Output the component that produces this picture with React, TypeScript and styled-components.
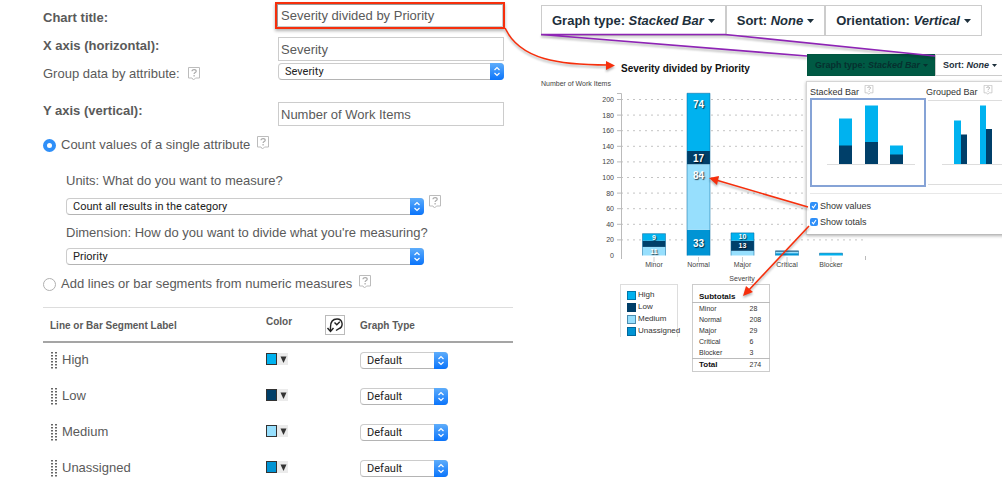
import React from 'react';
import styled, { createGlobalStyle } from 'styled-components';

const colors = {
  high: '#00b2ef',
  low: '#003f69',
  medium: '#97dffd',
  unassigned: '#0094d4',
  text: '#5a5a5a',
  red: '#f62f0c',
  purple: '#8e24b5',
};

const GlobalStyle = createGlobalStyle`
  *, *::before, *::after { box-sizing: border-box; }
  body {
    margin: 0;
    background: #fff;
    color: ${colors.text};
    font: 13px/20px "Liberation Sans", Arial, sans-serif;
  }
  button, input, select { font: inherit; color: inherit; margin: 0; }
`;

const Page = styled.main`
  position: relative;
  display: grid;
  grid-template-columns: minmax(0, 541fr) minmax(0, 461fr);
  overflow: hidden;
`;

const Form = styled.form`
  padding: 0 28px 0 43px;
`;

const AxisFields = styled.div`
  display: grid;
  grid-template-columns: 232px minmax(0, 1fr);
  padding-right: 8px;
`;

const LabelColumn = styled.div`
  display: flex;
  flex-direction: column;
  padding-top: 4px;
  line-height: 28px;
`;

const FieldColumn = styled.div`
  display: flex;
  flex-direction: column;
  padding-top: 2px;
`;

const FieldLabel = styled.label<{ $spaced?: boolean }>`
  display: block;
  font-weight: bold;
  margin-top: ${(p) => (p.$spaced ? '9px' : '0')};
`;

const LabelWithHelp = styled.div`
  display: flex;
  align-items: center;
  gap: 7px;
  height: 28px;
`;

const Highlight = styled.div`
  border: 2px solid ${colors.red};
  height: 27px;
  box-shadow: 0 2px 3px rgba(0, 0, 0, 0.3);
`;

const TextInput = styled.input`
  display: block;
  width: 100%;
  height: 24px;
  padding: 0 2px;
  border: 1px solid #ccc;
  border-radius: 0;
  background: #fff;
  ${Highlight} & { height: 23px; padding: 0 3px; border-color: #999 #ccc #ccc #999; }
`;

const FieldInset = styled.div<{ $top: number }>`
  margin: ${(p) => p.$top}px 1px 0 3px;
`;

const SelectFrame = styled.div`
  position: relative;
  flex: 1;
  height: 17px;
`;

const SelectControl = styled.select`
  appearance: none;
  display: block;
  width: 100%;
  height: 17px;
  padding: 0 16px 0 6px;
  border: 1px solid #ccc;
  border-bottom-color: #b4b4b4;
  border-radius: 4px;
  background: #fff;
  color: #222;
  font: 11px/15px Roboto, sans-serif;
`;

const SelectCap = styled.span`
  position: absolute;
  top: 0;
  right: 0;
  width: 14px;
  height: 17px;
  border-radius: 0 4px 4px 0;
  background: linear-gradient(#5eadfb, #0a74fb);
  pointer-events: none;
  svg { display: block; }
`;

const HelpButton = styled.button<{ $small?: boolean }>`
  display: block;
  flex: none;
  width: ${(p) => (p.$small ? '10px' : '14px')};
  height: ${(p) => (p.$small ? '10px' : '14px')};
  padding: 0;
  border: 0;
  background: none;
  svg { display: block; width: 100%; height: 100%; }
`;

const RadioRow = styled.div<{ $top: number }>`
  display: flex;
  align-items: center;
  height: 20px;
  margin-top: ${(p) => p.$top}px;
  label { margin: 0 6px 0 5px; }
  ${HelpButton} { margin-bottom: 4px; }
`;

const Radio = styled.input`
  appearance: none;
  flex: none;
  width: 13px;
  height: 13px;
  border: 1px solid #b0b0b0;
  border-radius: 50%;
  background: #fff;
  &:checked { border: 4px solid #2f8ff8; }
`;

const MeasureGroup = styled.div`
  display: flex;
  flex-direction: column;
  padding: 16px 0 0 23px;
`;

const SelectRow = styled.div<{ $top: number; $bottom: number }>`
  display: flex;
  gap: 4px;
  width: 376px;
  max-width: 100%;
  margin: ${(p) => p.$top}px 0 ${(p) => p.$bottom}px;
  ${HelpButton} { margin-top: -3px; }
  &:last-child { padding-right: 18px; }
`;

const SegmentTable = styled.table`
  width: 100%;
  margin-top: 13px;
  border-collapse: collapse;
  table-layout: fixed;
  border-top: 1px solid #ddd;
`;

const HeadCell = styled.th<{ $width?: number; $raised?: boolean }>`
  width: ${(p) => (p.$width ? `${p.$width}px` : 'auto')};
  height: 34px;
  padding: ${(p) => (p.$raised ? '0 0 4px' : '4px 0 0')};
  border-bottom: 2px solid #a5a5a5;
  font-size: 10px;
  line-height: 12px;
  text-align: left;
  &:first-child { padding-left: 7px; }
`;

const BodyCell = styled.td`
  padding: 8px 0 10px;
  vertical-align: top;
  tr:last-child & { padding-bottom: 0; }
`;

const SegmentName = styled.div`
  display: flex;
  align-items: center;
  gap: 5px;
  height: 18px;
  padding-left: 8px;
`;

const HistoryButton = styled.button`
  display: block;
  width: 20px;
  height: 20px;
  margin-top: -3px;
  padding: 0;
  border: 1px solid #bbb;
  background: #fff;
  svg { display: block; }
`;

const ColorButton = styled.button<{ $color: string }>`
  display: flex;
  align-items: center;
  margin-top: 2px;
  padding: 0;
  border: 0;
  background: #ebebeb;
  height: 12px;
  &::before {
    content: '';
    width: 11px;
    height: 12px;
    border: 1px solid #333;
    background: ${(p) => p.$color};
  }
  svg { display: block; margin-left: 2px; }
`;

const TypeSelect = styled.div`
  display: flex;
  width: 88px;
  padding-top: 1px;
`;

const Preview = styled.section`
  position: relative;
  color: #333;
`;

const Toolbar = styled.div<{ $compact?: boolean }>`
  display: flex;
  padding-top: ${(p) => (p.$compact ? '0' : '5px')};
`;

const ToolButton = styled.button<{ $compact?: boolean; $active?: boolean }>`
  display: flex;
  align-items: center;
  flex: none;
  gap: ${(p) => (p.$compact ? '3px' : '4px')};
  height: ${(p) => (p.$compact ? '22px' : '31px')};
  padding: ${(p) => (p.$compact ? '0 6px 0 7px' : '0 10px')};
  border: 1px solid ${(p) => (p.$active ? '#00553f' : '#ccc')};
  background: ${(p) => (p.$active ? '#005a44' : '#fff')};
  color: ${(p) => (p.$active ? '#06302f' : '#1d2f3b')};
  font-size: ${(p) => (p.$compact ? '9px' : '13px')};
  font-weight: bold;
  white-space: nowrap;
  & + & { margin-left: ${(p) => (p.$compact ? '0' : '-1px')}; }
`;

const ChartSvg = styled.svg`
  display: block;
  width: 100%;
  font-family: "Liberation Sans", Arial, sans-serif;
`;

const Summary = styled.div`
  display: flex;
  align-items: flex-start;
  gap: 14px;
  padding-left: 79px;
`;

const Legend = styled.ul`
  width: 58px;
  margin: 0;
  padding: 4px 0 0 6px;
  border: 1px solid #ddd;
  border-bottom: 0;
  list-style: none;
  font-size: 8px;
  line-height: 12px;
`;

const LegendItem = styled.li<{ $color: string }>`
  display: flex;
  align-items: center;
  gap: 2px;
  height: 12px;
  &::before {
    content: '';
    flex: none;
    width: 9px;
    height: 9px;
    border: 1px solid rgba(0, 60, 100, 0.5);
    background: ${(p) => p.$color};
  }
`;

const Totals = styled.table`
  width: 78px;
  border: 1px solid #ccc;
  border-collapse: collapse;
  font-size: 7px;
  line-height: 11px;
  th, td { padding: 0 0 0 6px; text-align: left; font-weight: normal; }
  td { padding: 0; width: 20px; }
  thead th { padding-top: 6px; font-size: 8px; font-weight: bold; border-bottom: 1px solid #bbb; color: #111; }
  tfoot th { font-size: 8px; font-weight: bold; color: #111; }
  tfoot tr { border-top: 1px solid #bbb; line-height: 12px; }
`;

const Popup = styled.div`
  position: absolute;
  top: 54px;
  left: 266px;
  right: 0;
`;

const Menu = styled.div`
  margin: 5px -8px 0 -1px;
  padding: 0 0 7px 3px;
  height: 154px;
  border: 1px solid #d5d5d5;
  border-bottom-color: #bbb;
  background: #fff;
  box-shadow: 0 1px 3px rgba(0, 0, 0, 0.3);
  font-size: 9px;
  line-height: 12px;
`;

const TypeChoices = styled.div`
  display: grid;
  grid-template-columns: 116px minmax(0, 1fr);
  padding-bottom: 6px;
  border-bottom: 1px solid #e8e8e8;
`;

const TypeCaption = styled.div`
  display: flex;
  align-items: center;
  gap: 5px;
  height: 16px;
  padding-top: 3px;
  ${HelpButton} { margin-bottom: 4px; }
`;

const Thumb = styled.button<{ $selected?: boolean }>`
  display: block;
  width: 100%;
  height: 89px;
  padding: 0;
  border: 2px solid ${(p) => (p.$selected ? '#86a3d6' : 'transparent')};
  box-shadow: ${(p) => (p.$selected ? 'none' : 'inset 0 1px #ddd, inset 0 -1px #ddd')};
  background: #fff;
  svg { display: block; }
`;

const CheckLabel = styled.label`
  display: flex;
  align-items: center;
  gap: 2px;
  height: 16px;
`;

const CheckGroup = styled.div`
  padding-top: 4px;
`;

const Checkbox = styled.input`
  appearance: none;
  width: 8px;
  height: 8px;
  border-radius: 2px;
  background: #2f8ff8 url("data:image/svg+xml,%3Csvg xmlns='http://www.w3.org/2000/svg' viewBox='0 0 8 8'%3E%3Cpath d='M2 4.2 3.4 5.8 6 2' fill='none' stroke='white' stroke-width='1.1'/%3E%3C/svg%3E");
`;

const Annotations = styled.svg`
  position: absolute;
  top: 0;
  left: 0;
  width: 100%;
  pointer-events: none;
  filter: drop-shadow(0 2px 1px rgba(0, 0, 0, 0.3));
`;

function Help({ topic, small }: { topic: string; small?: boolean }) {
  return (
    <HelpButton type="button" $small={small} aria-label={`Help: ${topic}`}>
      <svg viewBox="0 0 14 14">
        <path d="M1.500.5h11v10.500h-4l-2 2-1.500-2h-3.500z" fill="#fff" stroke="#bcbcbc" strokeLinejoin="round" />
        <path d="M5 4.200C5 2 9.200 2 9.200 4.200 9.200 5.600 7.100 5.600 7.100 7.100M7.100 8.100v1.300" fill="none" stroke="#aaa" strokeWidth="1.200" />
      </svg>
    </HelpButton>
  );
}

function Select({ id, value, label }: { id: string; value: string; label?: string }) {
  return (
    <SelectFrame>
      <SelectControl id={id} aria-label={label} defaultValue={value}>
        <option>{value}</option>
      </SelectControl>
      <SelectCap>
        <svg width="14" height="17" viewBox="0 0 14 17" fill="none" stroke="#fff" strokeWidth="1.200">
          <path d="M4.500 7 7 4.500 9.500 7M4.500 10 7 12.500 9.500 10" />
        </svg>
      </SelectCap>
    </SelectFrame>
  );
}

function Grip() {
  const rows = [1, 4, 7, 10, 13, 16];
  return (
    <svg width="6" height="18" viewBox="0 0 6 18" fill="#666">
      {rows.map((y) => (
        <React.Fragment key={y}>
          <rect x="0" y={y} width="2" height="1.500" />
          <rect x="4" y={y} width="2" height="1.500" />
        </React.Fragment>
      ))}
    </svg>
  );
}

function Tool({ name, value, compact, active }: { name: string; value: string; compact?: boolean; active?: boolean }) {
  return (
    <ToolButton type="button" $compact={compact} $active={active}>
      <span>
        {name}: <em>{value}</em>
      </span>
      <svg width={compact ? 5 : 7} height={compact ? 3 : 4} viewBox="0 0 7 4" fill="currentColor">
        <path d="M0 0h7L3.500 4z" />
      </svg>
    </ToolButton>
  );
}

type Part = { kind: 'high' | 'low' | 'medium' | 'unassigned'; value: number; shown?: boolean };

const bars: { name: string; x: number; parts: Part[] }[] = [
  { name: 'Minor', x: 113, parts: [
    { kind: 'medium', value: 11, shown: true }, { kind: 'low', value: 8 }, { kind: 'high', value: 9, shown: true } ] },
  { name: 'Normal', x: 157.5, parts: [
    { kind: 'unassigned', value: 33, shown: true }, { kind: 'medium', value: 84, shown: true },
    { kind: 'low', value: 17, shown: true }, { kind: 'high', value: 74, shown: true } ] },
  { name: 'Major', x: 201.5, parts: [
    { kind: 'medium', value: 6 }, { kind: 'low', value: 13, shown: true }, { kind: 'high', value: 10, shown: true } ] },
  { name: 'Critical', x: 246, parts: [
    { kind: 'unassigned', value: 3 }, { kind: 'medium', value: 2 }, { kind: 'low', value: 1 } ] },
  { name: 'Blocker', x: 290, parts: [{ kind: 'high', value: 3 }] },
];

const ticks = [0, 20, 40, 60, 80, 100, 120, 140, 160, 180, 200];
const yFor = (value: number) => 219.5 - value * 0.78;

function Bar({ name, x, parts }: { name: string; x: number; parts: Part[] }) {
  let total = 0;
  const large = name === 'Normal';
  return (
    <g>
      <path d={`M${x} 221v5`} stroke="#ccc" />
      {parts.map((part) => {
        total += part.value;
        const top = yFor(total);
        const height = part.value * 0.78;
        const labelY = large && height > 30 ? top + 15 : top + height / 2 + (large ? 4 : 2.5);
        return (
          <g key={part.kind}>
            <rect x={x - 11.5} y={top} width="23" height={height} fill={colors[part.kind]} />
            {part.shown && (
              <text
                x={x}
                y={labelY}
                textAnchor="middle"
                fontSize={large ? 10 : 7}
                fontWeight="bold"
                fill="#fff"
                style={{ textShadow: '1px 1px 1px rgba(0,0,0,.7)' }}
              >
                {part.value}
              </text>
            )}
          </g>
        );
      })}
      <path d={`M${x - 11.5} 219.500V${yFor(total)}h23V219.500`} fill="none" stroke="#00649b" strokeOpacity=".5" />
      <text x={x} y="231" textAnchor="middle" fontSize="7">{name}</text>
    </g>
  );
}

function Chart() {
  return (
    <ChartSvg viewBox="0 0 461 248" fill="#444" role="img" aria-label="Severity divided by Priority">
      <text x="80" y="36" fontSize="10" fontWeight="bold" fill="#111">Severity divided by Priority</text>
      <text x="0" y="50" fontSize="7">Number of Work Items</text>
      {ticks.map((tick) => (
        <g key={tick}>
          {tick > 0 && <path d={`M80 ${yFor(tick)}H324`} stroke="#c4c4c4" strokeDasharray="2 4" />}
          {tick > 0 && <path d={`M76 ${yFor(tick)}h4`} stroke="#bbb" />}
          <text x="73" y={yFor(tick) + 2.5} textAnchor="end" fontSize="7">{tick}</text>
        </g>
      ))}
      <path d="M76 57.500h4.500V223M324.500 220v4" fill="none" stroke="#bbb" />
      {bars.map((bar) => (
        <Bar key={bar.name} {...bar} />
      ))}
      <text x="201" y="245" textAnchor="middle" fontSize="7">Severity</text>
    </ChartSvg>
  );
}

const segments = [
  { name: 'High', color: colors.high },
  { name: 'Low', color: colors.low },
  { name: 'Medium', color: colors.medium },
  { name: 'Unassigned', color: colors.unassigned },
];

const totals: [string, number][] = [['Minor', 28], ['Normal', 208], ['Major', 29], ['Critical', 6], ['Blocker', 3]];

function SettingsForm() {
  return (
    <Form>
      <AxisFields>
        <LabelColumn>
          <FieldLabel htmlFor="title">Chart title:</FieldLabel>
          <FieldLabel htmlFor="x-axis">X axis (horizontal):</FieldLabel>
          <LabelWithHelp>
            <label htmlFor="group">Group data by attribute:</label>
            <Help topic="group by attribute" />
          </LabelWithHelp>
          <FieldLabel htmlFor="y-axis" $spaced>Y axis (vertical):</FieldLabel>
        </LabelColumn>
        <FieldColumn>
          <Highlight>
            <TextInput id="title" defaultValue="Severity divided by Priority" />
          </Highlight>
          <FieldInset $top={8}>
            <TextInput id="x-axis" defaultValue="Severity" />
          </FieldInset>
          <FieldInset $top={2}>
            <Select id="group" value="Severity" />
          </FieldInset>
          <FieldInset $top={22}>
            <TextInput id="y-axis" defaultValue="Number of Work Items" />
          </FieldInset>
        </FieldColumn>
      </AxisFields>
      <RadioRow $top={9}>
        <Radio type="radio" name="mode" id="count" defaultChecked />
        <label htmlFor="count">Count values of a single attribute</label>
        <Help topic="count values" />
      </RadioRow>
      <MeasureGroup>
        <label htmlFor="units">Units: What do you want to measure?</label>
        <SelectRow $top={7} $bottom={8}>
          <Select id="units" value="Count all results in the category" />
          <Help topic="units" />
        </SelectRow>
        <label htmlFor="dimension">Dimension: How do you want to divide what you're measuring?</label>
        <SelectRow $top={5} $bottom={0}>
          <Select id="dimension" value="Priority" />
        </SelectRow>
      </MeasureGroup>
      <RadioRow $top={9}>
        <Radio type="radio" name="mode" id="numeric" />
        <label htmlFor="numeric">Add lines or bar segments from numeric measures</label>
        <Help topic="numeric measures" />
      </RadioRow>
      <SegmentTable>
        <thead>
          <tr>
            <HeadCell $width={223}>Line or Bar Segment Label</HeadCell>
            <HeadCell $width={59} $raised>Color</HeadCell>
            <HeadCell $width={35}>
              <HistoryButton type="button" aria-label="Reset colors">
                <svg width="18" height="18" viewBox="0 0 18 18" fill="none" stroke="#222" strokeWidth="1.400">
                  <path d="M4.500 15V11C4.500 6 7 3 11 3a5 5 0 0 1 1.500 9.800L10 14.500" />
                  <path d="M1.500 12 4.500 15.500 7.500 12M8.500 6.500l2.300 2.300 3-3" />
                </svg>
              </HistoryButton>
            </HeadCell>
            <HeadCell>Graph Type</HeadCell>
          </tr>
        </thead>
        <tbody>
          {segments.map(({ name, color }) => (
            <tr key={name}>
              <BodyCell>
                <SegmentName>
                  <Grip />
                  {name}
                </SegmentName>
              </BodyCell>
              <BodyCell colSpan={2}>
                <ColorButton type="button" $color={color} aria-label={`${name} color`}>
                  <svg width="9" height="8" viewBox="0 0 9 8" fill="#333">
                    <path d="M1.500 1.500h6L4.500 8z" />
                  </svg>
                </ColorButton>
              </BodyCell>
              <BodyCell>
                <TypeSelect>
                  <Select id={`type-${name}`} value="Default" label={`${name} graph type`} />
                </TypeSelect>
              </BodyCell>
            </tr>
          ))}
        </tbody>
      </SegmentTable>
    </Form>
  );
}

function GraphTypePopup() {
  return (
    <Popup>
      <Toolbar $compact>
        <Tool name="Graph type" value="Stacked Bar" compact active />
        <Tool name="Sort" value="None" compact />
      </Toolbar>
      <Menu>
        <TypeChoices>
          <TypeCaption>
            Stacked Bar <Help topic="stacked bar" small />
          </TypeCaption>
          <TypeCaption>
            Grouped Bar <Help topic="grouped bar" small />
          </TypeCaption>
          <Thumb type="button" $selected aria-label="Stacked Bar">
            <svg width="112" height="85" viewBox="0 0 112 85">
              <path d="M27 18.500h13V46H27zM53 5.500h13V43H53zM78 45.500h13V55H78z" fill={colors.high} />
              <path d="M27 45.500h13v19H27zM53 42h13v22.500H53zM78 54.500h13v10H78z" fill={colors.low} />
              <path d="M15 64.500h88" stroke="#ddd" />
            </svg>
          </Thumb>
          <Thumb type="button" aria-label="Grouped Bar">
            <svg width="77" height="85" viewBox="0 0 77 85">
              <path d="M26 20.500h7v44h-7zM52 5.500h6v59h-6z" fill={colors.high} />
              <path d="M33 34.500h6v30h-6zM58 29h6v35.500h-6z" fill={colors.low} />
              <path d="M14 64.500h63" stroke="#ddd" />
            </svg>
          </Thumb>
        </TypeChoices>
        <CheckGroup>
          <CheckLabel>
            <Checkbox type="checkbox" defaultChecked />
            Show values
          </CheckLabel>
          <CheckLabel>
            <Checkbox type="checkbox" defaultChecked />
            Show totals
          </CheckLabel>
        </CheckGroup>
      </Menu>
    </Popup>
  );
}

export default function App() {
  return (
    <Page>
      <GlobalStyle />
      <SettingsForm />
      <Preview>
        <Toolbar>
          <Tool name="Graph type" value="Stacked Bar" />
          <Tool name="Sort" value="None" />
          <Tool name="Orientation" value="Vertical" />
        </Toolbar>
        <Chart />
        <Summary>
          <Legend>
            {segments.map(({ name, color }) => (
              <LegendItem key={name} $color={color}>{name}</LegendItem>
            ))}
          </Legend>
          <Totals>
            <thead>
              <tr><th colSpan={2}>Subtotals</th></tr>
            </thead>
            <tbody>
              {totals.map(([name, value]) => (
                <tr key={name}><th>{name}</th><td>{value}</td></tr>
              ))}
            </tbody>
            <tfoot>
              <tr><th>Total</th><td>274</td></tr>
            </tfoot>
          </Totals>
        </Summary>
        <GraphTypePopup />
      </Preview>
      <Annotations viewBox="0 0 1002 481" aria-hidden="true">
        <g fill="none" stroke={colors.purple} strokeWidth="1.700">
          <path d="M541 34.500H725L935 56M541 34.500 807 56" />
        </g>
        <g fill="none" stroke={colors.red} strokeWidth="1.600">
          <path d="M505 28C520 60 560 65 608 65M808 207 716 180M809 226 748 291" />
        </g>
        <g fill={colors.red}>
          <path d="M615 65.500 606 61V70zM709 178 719 176 717 185zM743 296 746 286 753 292z" />
        </g>
      </Annotations>
    </Page>
  );
}
